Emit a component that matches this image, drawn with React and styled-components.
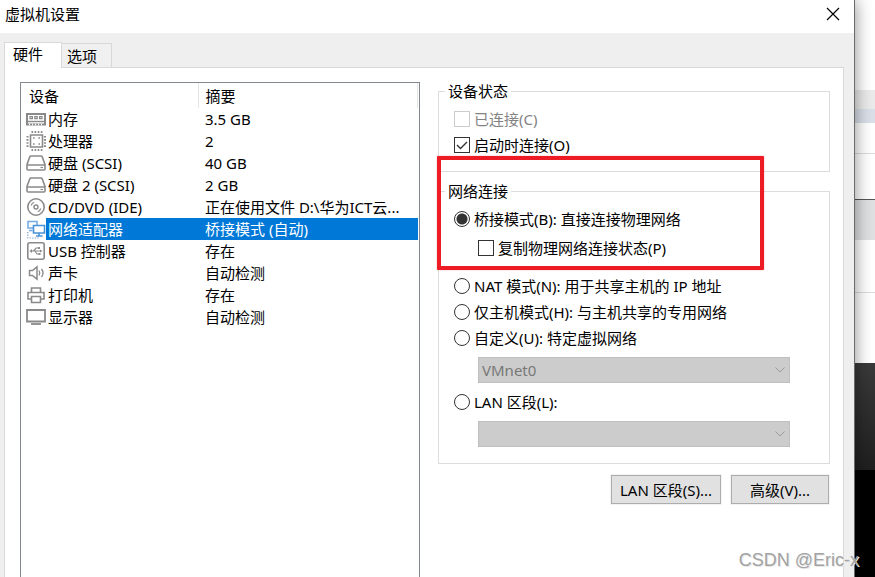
import React, { useState } from "react";
import styled, { createGlobalStyle } from "styled-components";

const GlobalStyle = createGlobalStyle`
  *, *::before, *::after { box-sizing: border-box; }
  body {
    margin: 0;
    font: 400 15px/20px "Noto Sans", "Noto Sans CJK SC", sans-serif;
    color: #000;
    background: #fff;
  }
  button, select, input { font: inherit; color: inherit; }
`;

const Desktop = styled.div`
  position: relative;
  display: flex;
  height: 100vh;
  overflow: hidden;
`;

const Dialog = styled.main`
  position: relative;
  flex: 1;
  min-width: 0;
  display: flex;
  flex-direction: column;
  background: #efefef;
  border-right: 1px solid #6b6b6b;
  box-shadow: 0 0 16px rgba(0, 0, 0, 0.45);
  z-index: 1;
`;

const Backdrop = styled.div`
  flex: 0 0 20px;
  display: flex;
  flex-direction: column;
`;

const Band = styled.div`
  flex: ${(p) => (p.$grow ? "1 0 0" : `0 0 ${p.$size}px`)};
  background: ${(p) => p.$fill};
`;

const TitleBar = styled.header`
  display: flex;
  justify-content: space-between;
  align-items: flex-start;
  height: 33px;
  padding: 4px 11px 0 5px;
  background: #fff;
`;

const Title = styled.h1`
  margin: 0;
  font-size: 15px;
  font-weight: 400;
  line-height: 20px;
`;

const CloseButton = styled.button`
  display: flex;
  padding: 3px;
  border: 0;
  background: none;
`;

const TabList = styled.div`
  display: flex;
  align-items: flex-end;
  height: 34px;
  padding-left: 4px;
`;

const Tab = styled.button`
  height: ${(p) => (p.$active ? 26 : 24)}px;
  margin-bottom: ${(p) => (p.$active ? -1 : 0)}px;
  padding: ${(p) => (p.$active ? "0 18px 4px 8px" : "0 14px 0 5px")};
  border: 1px solid #d9d9d9;
  border-bottom: 0;
  border-left-width: ${(p) => (p.$active ? 1 : 0)}px;
  background: ${(p) => (p.$active ? "#fff" : "#f0f0f0")};
  position: relative;
  line-height: 20px;
`;

const Panel = styled.section`
  flex: 1;
  min-height: 0;
  display: grid;
  grid-template-columns: minmax(0, 400fr) minmax(0, 392fr);
  column-gap: 18px;
  margin: 0 10px 0 4px;
  padding: 14px 13px 0 15px;
  border: 1px solid #d9d9d9;
  border-bottom: 0;
  background: #fff;
`;

const DeviceList = styled.div`
  border: 1px solid #828790;
  border-bottom: 0;
  padding-right: 1px;
`;

const DeviceTable = styled.table`
  width: 100%;
  border-collapse: collapse;
  table-layout: fixed;
`;

const HeadCell = styled.th`
  width: ${(p) => p.$width || "auto"};
  height: 25px;
  padding: 0 0 0 ${(p) => p.$indent}px;
  border-right: 1px solid #e5e5e5;
  text-align: left;
  font-weight: inherit;
  line-height: 20px;
`;

const DeviceRow = styled.tr`
  height: 22px;
  color: ${(p) => (p.$selected ? "#fff" : "#000")};
`;

const NameCell = styled.td`
  padding: 0 0 0 5px;
`;

const NameBox = styled.div`
  display: flex;
  height: 22px;
`;

const NameText = styled.span`
  flex: 1;
  padding-left: 2px;
  line-height: 22px;
  white-space: nowrap;
  background: ${(p) => (p.$selected ? "#0078d7" : "transparent")};
`;

const SummaryCell = styled.td`
  padding: 0 8px 0 7px;
  line-height: 22px;
  white-space: nowrap;
  overflow: hidden;
  text-overflow: ellipsis;
  background: ${(p) => (p.$selected ? "#0078d7" : "transparent")};
`;

const Settings = styled.form`
  min-width: 0;
`;

const Group = styled.fieldset`
  position: relative;
  min-width: 0;
  margin: 0 0 10px;
  padding: 5px 39px ${(p) => p.$bottom}px 15px;
  border: 1px solid #dcdcdc;
`;

const Legend = styled.legend`
  margin-left: -9px;
  padding: 0 3px;
  line-height: 19px;
`;

const Option = styled.label`
  display: flex;
  align-items: center;
  gap: 4px;
  height: 26px;
  margin: ${(p) => (p.$nested ? "3px 0 12px 24px" : "0")};
  color: ${(p) => (p.$disabled ? "#838383" : "#000")};
  white-space: nowrap;
`;

const CheckBox = styled.input`
  appearance: none;
  flex: none;
  width: 16px;
  height: 16px;
  margin: 0;
  border: 1px solid #333;
  background: #fff;
  &:disabled { border-color: #ccc; }
  &:checked {
    background: #fff
      url("data:image/svg+xml,%3Csvg xmlns='http://www.w3.org/2000/svg' viewBox='0 0 14 14'%3E%3Cpath d='M2 7l3.5 3.5L12 4' fill='none' stroke='%23333' stroke-width='1.4'/%3E%3C/svg%3E");
  }
`;

const Radio = styled.input`
  appearance: none;
  flex: none;
  width: 16px;
  height: 16px;
  margin: 0;
  border: 1px solid #333;
  border-radius: 50%;
  background: #fff;
  &:checked { background: radial-gradient(circle, #333 5px, #fff 6px); }
`;

const SelectBox = styled.div`
  display: grid;
  align-items: center;
  margin: 6px 0 6px 24px;
  > * { grid-area: 1 / 1; }
  > svg { justify-self: end; margin-right: 5px; }
`;

const Select = styled.select`
  appearance: none;
  width: 100%;
  height: 26px;
  padding: 0 3px;
  border: 1px solid #bfbfbf;
  border-radius: 0;
  background: #ccc;
  &:disabled { color: #787878; opacity: 1; }
`;

const Actions = styled.div`
  display: flex;
  justify-content: flex-end;
  gap: 10px;
  margin: 11px 1px 0 0;
`;

const ActionButton = styled.button`
  width: ${(p) => (p.$wide ? 110 : 98)}px;
  height: 29px;
  padding: 0;
  border: 1px solid #adadad;
  background: #e1e1e1;
  box-shadow: 0 0 0 1px #f3f3f3;
  white-space: nowrap;
`;

const Marker = styled.div`
  position: absolute;
  top: -45px;
  left: -2px;
  right: 65px;
  height: 114px;
  border: 4px solid #ed1c24;
  border-radius: 1px;
  box-shadow: 0 0 1px #ed1c24;
  pointer-events: none;
`;

const Watermark = styled.div`
  position: absolute;
  right: 16px;
  bottom: 6px;
  z-index: 2;
  font: 18px/22px "Liberation Sans", sans-serif;
  color: #a2a2a2;
  text-shadow: 1px 1px 0 #e8e8e8;
`;

const Glyph = styled.svg`
  flex: none;
  width: 20px;
  height: 22px;
  fill: none;
  stroke: #8a8a8a;
  stroke-width: 1.6;
`;

const glyphs = {
  memory: (
    <>
      <path d="M1 6h18v10.5H1z" strokeWidth="2" />
      <path d="M4 8.6h2.4v2H4zM8.8 8.6h2.4v2H8.8zM13.6 8.6H16v2h-2.4z" strokeWidth="1.2" />
      <path d="M2 13.5h16" strokeWidth="1.4" />
      <path d="M3 16.5h14" stroke="#fff" strokeDasharray="1 2" strokeWidth="1.4" />
    </>
  ),
  cpu: (
    <>
      <path d="M4.5 5h12v12h-12z" />
      <path d="M5.5 2h11M5.5 20h11" strokeDasharray="1.6 1.5" strokeWidth="2" />
      <path d="M1.5 6v11M19 6v11" strokeDasharray="1.6 1.5" strokeWidth="2" />
      <path d="M7 8h1.6M12.4 8H14M7 14h1.6M12.4 14H14" />
    </>
  ),
  disk: (
    <>
      <path d="M5 4h10q.8 0 1.2.8L19 12.5V17q0 1-1 1H2q-1 0-1-1v-4.5L3.8 4.8Q4.2 4 5 4zM1 13h18" />
      <path d="M14.5 15.5h2.5" strokeWidth="1.2" />
    </>
  ),
  disc: (
    <>
      <circle cx="10" cy="11" r="8.2" />
      <circle cx="10" cy="11" r="2" strokeWidth="1.4" />
      <path d="M5.2 9.500a5 5 0 0 1 3-3.200M14.800 12.500a5 5 0 0 1-3 3.200" strokeWidth="1.1" />
    </>
  ),
  network: (
    <>
      <path d="M2 3.5h9V10H2z" stroke="#76ace0" />
      <path d="M3 12.5h3.5" stroke="#76ace0" />
      <path d="M7.5 7.5h11V15h-11z" stroke="#4a92d8" fill="#fff" />
      <path d="M13 15v2.5M10 18h6.5" stroke="#4a92d8" />
      <path d="M1.8 14v6h11" stroke="#7a9cbd" strokeDasharray="1.2 1.4" strokeWidth="1.2" />
    </>
  ),
  usb: (
    <>
      <rect x="1.8" y="2.8" width="16.4" height="16.4" rx="2" />
      <path d="M5 11h10M7.5 11L10 8h2M9 11l2 3h2" strokeWidth="1.2" />
      <path d="M3.5 11L6 9v4zM12 7h2v2h-2zM12.5 13h2v2h-2zM14 9.5l2.5 1.5-2.5 1.5z" fill="#8a8a8a" stroke="none" />
    </>
  ),
  sound: (
    <>
      <path d="M3.5 8.5h3L11 4.8v12.4l-4.500-3.700h-3z" strokeWidth="1.5" />
      <path d="M13 8.5q1.5 2.5 0 5M15.5 7q3 4 0 8" strokeWidth="1.3" />
    </>
  ),
  printer: (
    <>
      <path d="M5.5 8V4h9v4M5 15H2V8.5h16V15h-3" />
      <path d="M5.5 12.5h9v6h-9z" />
    </>
  ),
  display: (
    <>
      <path d="M1 4h18v11.5H1z" strokeWidth="1.8" />
      <path d="M5 18h10" strokeWidth="1.8" />
    </>
  ),
};

const devices = [
  ["memory", "内存", "3.5 GB"],
  ["cpu", "处理器", "2"],
  ["disk", "硬盘 (SCSI)", "40 GB"],
  ["disk", "硬盘 2 (SCSI)", "2 GB"],
  ["disc", "CD/DVD (IDE)", "正在使用文件 D:\\华为ICT云..."],
  ["network", "网络适配器", "桥接模式 (自动)"],
  ["usb", "USB 控制器", "存在"],
  ["sound", "声卡", "自动检测"],
  ["printer", "打印机", "存在"],
  ["display", "显示器", "自动检测"],
];

const Chevron = () => (
  <svg width="10" height="6" viewBox="0 0 10 6" fill="none" stroke="#9c9c9c" aria-hidden="true">
    <path d="M.5.5L5 5 9.5.5" />
  </svg>
);

const backdropBands = [
  [90, "#fff"],
  [19, "#ebebeb"],
  [14, "#dadfe8"],
  [30, "#fff"],
  [1, "#dcdcdc"],
  [45, "#fff"],
  [1, "#555"],
  [40, "#dfe0e2"],
  [52, "#fff"],
  [1, "#dcdcdc"],
  [70, "#fff"],
  [107, "linear-gradient(#3a3a3a, #1f1f1f)"],
];

export default function App() {
  const [selected, setSelected] = useState("网络适配器");
  const [mode, setMode] = useState("bridge");

  const radio = (value, text) => (
    <Option>
      <Radio type="radio" name="mode" checked={mode === value} onChange={() => setMode(value)} />
      {text}
    </Option>
  );

  return (
    <>
      <GlobalStyle />
      <Desktop>
        <Dialog>
          <TitleBar>
            <Title>虚拟机设置</Title>
            <CloseButton type="button" aria-label="关闭">
              <svg width="14" height="14" viewBox="0 0 14 14" stroke="#000" strokeWidth="1.2">
                <path d="M1 1l12 12M13 1L1 13" />
              </svg>
            </CloseButton>
          </TitleBar>
          <TabList role="tablist">
            <Tab type="button" role="tab" aria-selected="true" $active>硬件</Tab>
            <Tab type="button" role="tab" aria-selected="false">选项</Tab>
          </TabList>
          <Panel>
            <DeviceList>
              <DeviceTable>
                <thead>
                  <tr>
                    <HeadCell $width="177px" $indent={8}>设备</HeadCell>
                    <HeadCell $indent={7}>摘要</HeadCell>
                  </tr>
                </thead>
                <tbody>
                  {devices.map(([icon, name, summary]) => {
                    const on = name === selected;
                    return (
                      <DeviceRow key={name} $selected={on} onClick={() => setSelected(name)}>
                        <NameCell>
                          <NameBox>
                            <Glyph viewBox="0 0 20 22" aria-hidden="true">{glyphs[icon]}</Glyph>
                            <NameText $selected={on}>{name}</NameText>
                          </NameBox>
                        </NameCell>
                        <SummaryCell $selected={on}>{summary}</SummaryCell>
                      </DeviceRow>
                    );
                  })}
                </tbody>
              </DeviceTable>
            </DeviceList>
            <Settings>
              <Group $bottom={13}>
                <Legend>设备状态</Legend>
                <Option $disabled>
                  <CheckBox type="checkbox" disabled />
                  已连接(C)
                </Option>
                <Option>
                  <CheckBox type="checkbox" defaultChecked />
                  启动时连接(O)
                </Option>
              </Group>
              <Group $bottom={10}>
                <Legend>网络连接</Legend>
                {radio("bridge", "桥接模式(B): 直接连接物理网络")}
                <Option $nested>
                  <CheckBox type="checkbox" />
                  复制物理网络连接状态(P)
                </Option>
                {radio("nat", "NAT 模式(N): 用于共享主机的 IP 地址")}
                {radio("host", "仅主机模式(H): 与主机共享的专用网络")}
                {radio("custom", "自定义(U): 特定虚拟网络")}
                <SelectBox>
                  <Select aria-label="特定虚拟网络" disabled>
                    <option>VMnet0</option>
                  </Select>
                  <Chevron />
                </SelectBox>
                {radio("lan", "LAN 区段(L):")}
                <SelectBox>
                  <Select aria-label="LAN 区段" disabled />
                  <Chevron />
                </SelectBox>
                <Marker />
              </Group>
              <Actions>
                <ActionButton type="button" $wide>LAN 区段(S)...</ActionButton>
                <ActionButton type="button">高级(V)...</ActionButton>
              </Actions>
            </Settings>
          </Panel>
        </Dialog>
        <Backdrop>
          {backdropBands.map(([size, fill], i) => (
            <Band key={i} $size={size} $fill={fill} />
          ))}
          <Band $grow $fill="#000" />
        </Backdrop>
        <Watermark>CSDN @Eric-x</Watermark>
      </Desktop>
    </>
  );
}
